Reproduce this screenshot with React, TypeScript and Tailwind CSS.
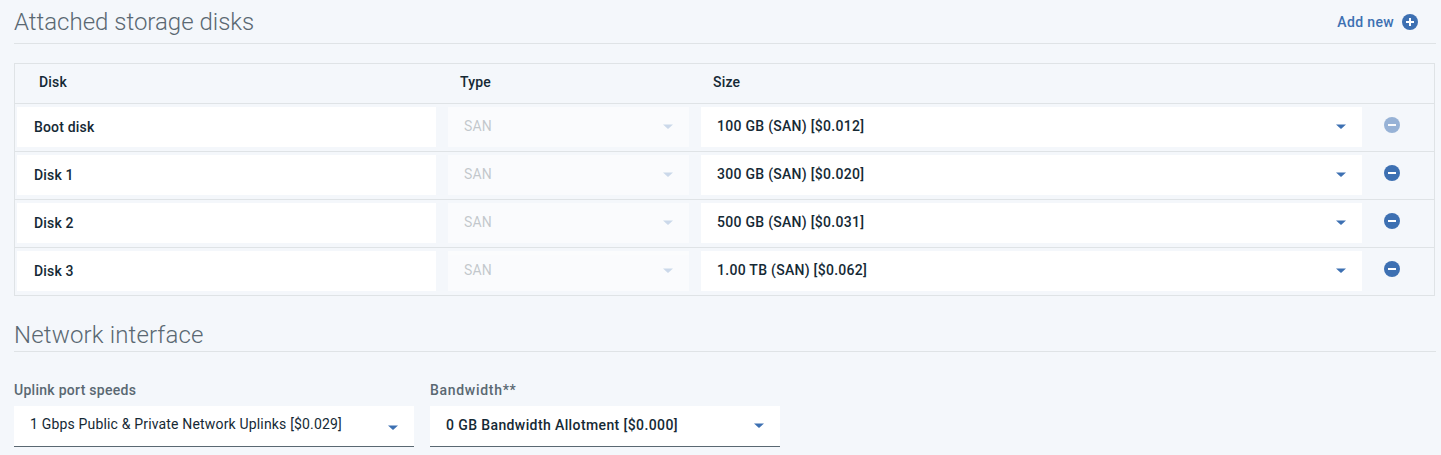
import React from "react";

type Disk = { name: string; size: string; locked?: boolean };

const disks: Disk[] = [
  { name: "Boot disk", size: "100 GB (SAN) [$0.012]", locked: true },
  { name: "Disk 1", size: "300 GB (SAN) [$0.020]" },
  { name: "Disk 2", size: "500 GB (SAN) [$0.031]" },
  { name: "Disk 3", size: "1.00 TB (SAN) [$0.062]" },
];

function Caret({ className = "" }: { className?: string }) {
  return (
    <svg className={`h-[5px] w-[10px] shrink-0 ${className}`} viewBox="0 0 10 5" fill="#3d70b2">
      <path d="M0 .4h10L5 5z" />
    </svg>
  );
}

function CircleIcon({ plus = false, className = "" }: { plus?: boolean; className?: string }) {
  return (
    <svg className={`size-4 shrink-0 ${className}`} viewBox="0 0 16 16">
      <circle cx="8" cy="8" r="8" fill="#3d70b2" />
      <path d={plus ? "M4 7h3V4h2v3h3v2H9v3H7V9H4z" : "M4 7h8v2H4z"} fill="#fff" />
    </svg>
  );
}

function DiskRow({ disk }: { disk: Disk }) {
  return (
    <div className="flex h-12 border-b border-[#dfe3e6] pt-[3px] pl-[2px] font-medium">
      <div className="flex h-10 w-[419px] items-center bg-white pl-[17px] leading-5 tracking-[0.17px]">{disk.name}</div>
      <div className="ml-3 flex h-10 w-[241px] items-center justify-between bg-white pr-4 pb-px pl-4 opacity-60">
        <span className="-mt-px font-normal tracking-[0.1px] text-[#152935] opacity-40">SAN</span>
        <Caret className="opacity-40" />
      </div>
      <div className="ml-3 flex h-10 w-[661px] items-center justify-between bg-white pr-4 pb-px pl-4">
        <span className="-mt-px tracking-[0.28px]">{disk.size}</span>
        <Caret />
      </div>
      <CircleIcon className={disk.locked ? "mt-[10px] ml-[22px] opacity-50" : "mt-[10px] ml-[22px]"} />
    </div>
  );
}

export default function App() {
  return (
    <main className="h-[455px] w-[1441px] bg-[#f4f7fb] pl-[14px] font-['Roboto','Liberation_Sans',sans-serif] text-sm leading-5 text-[#152935]">
      <header className="flex h-11 w-[1422px] items-center justify-between border-b border-[#dfe3e6] pr-[18px]">
        <h2 className="mt-px text-2xl leading-[43px] font-light text-[#5a6872]">Attached storage disks</h2>
        <button className="flex items-center gap-2 font-medium tracking-[0.35px] text-[#3d70b2]">
          Add new
          <CircleIcon plus />
        </button>
      </header>

      <section className="mt-[19px] w-[1421px] border-x border-t border-[#dfe3e6]">
        <div className="flex h-10 items-center border-b border-[#dfe3e6] pb-[3px] pl-6 font-medium tracking-[0.2px]">
          <span className="w-[421px]">Disk</span>
          <span className="w-[253px]">Type</span>
          <span>Size</span>
        </div>
        {disks.map((disk) => (
          <DiskRow key={disk.name} disk={disk} />
        ))}
      </section>

      <h2 className="mt-[22px] h-[34px] w-[1422px] border-b border-[#dfe3e6] text-2xl leading-[34px] font-light tracking-[0.15px] text-[#5a6872]">
        Network interface
      </h2>

      <div className="mt-7 flex gap-4">
        <div className="w-[400px]">
          <div className="h-[26px] font-medium tracking-[0.28px] text-[#5a6872]">Uplink port speeds</div>
          <div className="flex h-[41px] items-center justify-between border-b border-[#5a6872] bg-white pr-4 pl-4">
            <span className="-mt-1 tracking-[0.17px]">1 Gbps Public &amp; Private Network Uplinks [$0.029]</span>
            <Caret className="mt-[3px]" />
          </div>
        </div>
        <div className="w-[350px]">
          <div className="h-[26px] font-medium tracking-[0.7px] text-[#5a6872]">Bandwidth**</div>
          <div className="flex h-[41px] items-center justify-between border-b border-[#5a6872] bg-white pr-4 pl-4">
            <span className="-mt-[2px] font-medium tracking-[0.39px]">0 GB Bandwidth Allotment [$0.000]</span>
            <Caret className="-mt-px" />
          </div>
        </div>
      </div>
    </main>
  );
}
